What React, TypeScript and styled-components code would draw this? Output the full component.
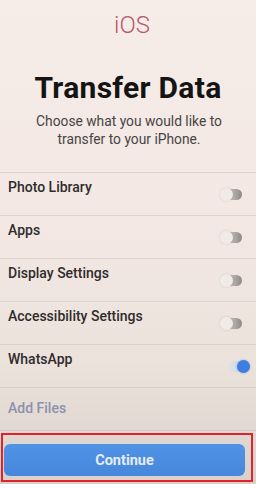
import styled, { createGlobalStyle } from "styled-components";

const GlobalStyle = createGlobalStyle`
  html, body {
    margin: 0;
    padding: 0;
  }
  body {
    font-family: Roboto, "Liberation Sans", Arial, sans-serif;
  }
`;

const Screen = styled.div`
  width: 256px;
  height: 484px;
  overflow: hidden;
  display: flex;
  flex-direction: column;
  background: linear-gradient(180deg, #f6ece8 0%, #f3e8e3 45%, #ece2dc 75%, #d9d0cb 100%);
`;

const Brand = styled.div`
  padding: 12px 0 0 8px;
  height: 26px;
  line-height: 26px;
  text-align: center;
  font-size: 24px;
  font-weight: 300;
  color: #b55a6c;
`;

const Title = styled.h1`
  margin: 32px 0 0;
  line-height: 36px;
  text-align: center;
  font-size: 30px;
  font-weight: 700;
  color: #141414;
  letter-spacing: 0.3px;
`;

const Subtitle = styled.p`
  margin: 6px 0 0 2px;
  font-size: 13.8px;
  line-height: 18px;
  text-align: center;
  color: #474444;
`;

const List = styled.div`
  margin-top: 24px;
  display: flex;
  flex-direction: column;
`;

const Row = styled.div`
  height: 42px;
  border-top: 1px solid rgba(200, 185, 178, 0.45);
  display: flex;
  justify-content: space-between;
  padding: 0 11px 0 8px;
`;

const Label = styled.span<{ $link?: boolean }>`
  padding-top: ${(p) => (p.$link ? "12px" : "6px")};
  font-size: 14px;
  font-weight: 500;
  color: ${(p) => (p.$link ? "#8d90ad" : "#2e2c2c")};
`;

const Track = styled.div<{ $on: boolean }>`
  align-self: center;
  position: relative;
  width: 20px;
  height: 11px;
  border-radius: 6px;
  background: ${(p) =>
    p.$on
      ? "linear-gradient(90deg, #e2e2ea 0%, #c9cfe0 100%)"
      : "linear-gradient(90deg, #e8e2de 0%, #8f8985 100%)"};
  margin-right: ${(p) => (p.$on ? "-3px" : "3px")};
`;

const Knob = styled.div<{ $on: boolean }>`
  position: absolute;
  top: -1px;
  ${(p) => (p.$on ? "right: -2px;" : "left: -2px;")}
  width: 13px;
  height: 13px;
  border-radius: 50%;
  background: ${(p) => (p.$on ? "#3d7ee3" : "#f1ebe8")};
  box-shadow: ${(p) =>
    p.$on ? "0 0 2px rgba(40, 90, 200, 0.5)" : "0 0 3px rgba(0, 0, 0, 0.12)"};
`;

const Footer = styled.div`
  border-top: 1px solid rgba(200, 185, 178, 0.45);
  padding-top: 2px;
`;

const Highlight = styled.div`
  margin: 0 3px 0 1px;
  border: 2px solid #e2232b;
  padding: 9px 6px 4px 1px;
`;

const ContinueButton = styled.button`
  width: 100%;
  height: 32px;
  border: none;
  border-radius: 6px;
  background: linear-gradient(180deg, #5093e6 0%, #4687dc 100%);
  color: #e6ecf6;
  font-family: Roboto, "Liberation Sans", Arial, sans-serif;
  font-size: 14.5px;
  font-weight: 700;
  display: flex;
  align-items: center;
  justify-content: center;
`;

const items = [
  { name: "Photo Library", on: false },
  { name: "Apps", on: false },
  { name: "Display Settings", on: false },
  { name: "Accessibility Settings", on: false },
  { name: "WhatsApp", on: true },
];

function Toggle({ on }: { on: boolean }) {
  return (
    <Track $on={on}>
      <Knob $on={on} />
    </Track>
  );
}

export default function App() {
  return (
    <Screen>
      <GlobalStyle />
      <Brand>iOS</Brand>
      <Title>Transfer Data</Title>
      <Subtitle>
        Choose what you would like to
        <br />
        transfer to your iPhone.
      </Subtitle>
      <List>
        {items.map((item) => (
          <Row key={item.name}>
            <Label>{item.name}</Label>
            <Toggle on={item.on} />
          </Row>
        ))}
        <Row>
          <Label $link>Add Files</Label>
        </Row>
      </List>
      <Footer>
        <Highlight>
          <ContinueButton>Continue</ContinueButton>
        </Highlight>
      </Footer>
    </Screen>
  );
}
